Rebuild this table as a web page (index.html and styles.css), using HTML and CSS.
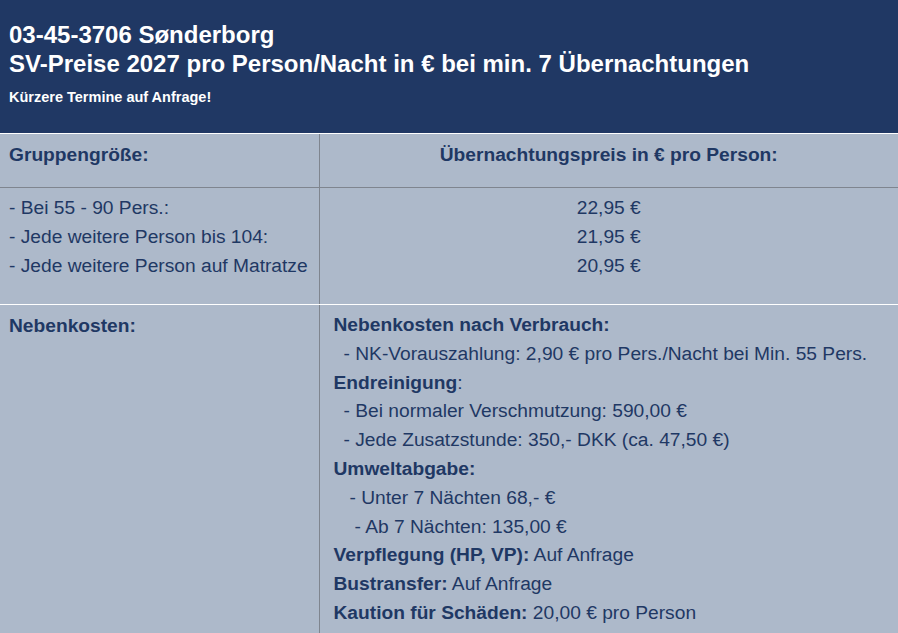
FILE: index.html
```html
<!DOCTYPE html>
<html lang="de">
<head>
<meta charset="utf-8">
<title>03-45-3706 Sønderborg</title>
<link rel="stylesheet" href="styles.css">
</head>
<body>
<div class="page">
  <header class="banner">
    <h1 class="title">03-45-3706 Sønderborg<br>SV-Preise 2027 pro Person/Nacht in € bei min. 7 Übernachtungen</h1>
    <p class="note">Kürzere Termine auf Anfrage!</p>
  </header>
  <table class="prices">
    <colgroup><col class="col-left"><col class="col-right"></colgroup>
    <tr class="row-head">
      <th class="cell-left">Gruppengröße:</th>
      <th class="cell-center">Übernachtungspreis in € pro Person:</th>
    </tr>
    <tr class="row-groups">
      <td class="cell-left">
        <div>- Bei 55 - 90 Pers.:</div>
        <div>- Jede weitere Person bis 104:</div>
        <div>- Jede weitere Person auf Matratze</div>
      </td>
      <td class="cell-center">
        <div>22,95 €</div>
        <div>21,95 €</div>
        <div>20,95 €</div>
      </td>
    </tr>
    <tr class="row-extra">
      <td class="cell-left"><b>Nebenkosten:</b></td>
      <td class="cell-right">
        <div><b>Nebenkosten nach Verbrauch:</b></div>
        <div class="ind1">- NK-Vorauszahlung: 2,90 € pro Pers./Nacht bei Min. 55 Pers.</div>
        <div><b>Endreinigung</b>:</div>
        <div class="ind1">- Bei normaler Verschmutzung: 590,00 €</div>
        <div class="ind1">- Jede Zusatzstunde: 350,- DKK (ca. 47,50 €)</div>
        <div><b>Umweltabgabe:</b></div>
        <div class="ind2">- Unter 7 Nächten 68,- €</div>
        <div class="ind3">- Ab 7 Nächten: 135,00 €</div>
        <div><b>Verpflegung (HP, VP):</b> Auf Anfrage</div>
        <div><b>Bustransfer:</b> Auf Anfrage</div>
        <div><b>Kaution für Schäden:</b> 20,00 € pro Person</div>
      </td>
    </tr>
  </table>
</div>
</body>
</html>
```
FILE: styles.css
```css
html, body {
  margin: 0;
  padding: 0;
  background: #adb9ca;
}
body {
  font-family: "Liberation Sans", Arial, sans-serif;
  color: #1f3864;
}
.page {
  width: 898px;
  height: 633px;
  overflow: hidden;
  background: #adb9ca;
}
.banner {
  box-sizing: border-box;
  height: 134px;
  background: #203864;
  border-bottom: 1px solid #ffffff;
  padding: 20px 9px 0;
  color: #ffffff;
}
.title {
  margin: 0;
  font-size: 24px;
  line-height: 29px;
  font-weight: bold;
}
.note {
  margin: 11px 0 0;
  font-size: 14.5px;
  line-height: 17px;
  font-weight: bold;
}
.prices {
  width: 898px;
  border-collapse: collapse;
  table-layout: fixed;
  font-size: 19.2px;
  line-height: 29px;
  color: #1f3864;
}
.col-left { width: 319px; }
.prices th, .prices td {
  vertical-align: top;
  padding: 0;
}
.prices th { font-weight: bold; }
.cell-left {
  text-align: left;
  padding: 6px 9px 0 !important;
  border-right: 1px solid #7f858f;
}
.cell-center { text-align: center; padding-top: 6px !important; }
.cell-right { text-align: left; padding: 6px 0 0 14px !important; line-height: 28.8px; }
.row-head th { height: 47px; border-bottom: 1px solid #7f858f; }
.row-groups td { height: 111px; border-bottom: 1px solid #ffffff; padding-top: 5px !important; }
.row-extra td { height: 330px; }
.ind1 { padding-left: 10px; }
.ind2 { padding-left: 16px; }
.ind3 { padding-left: 21px; }
```
